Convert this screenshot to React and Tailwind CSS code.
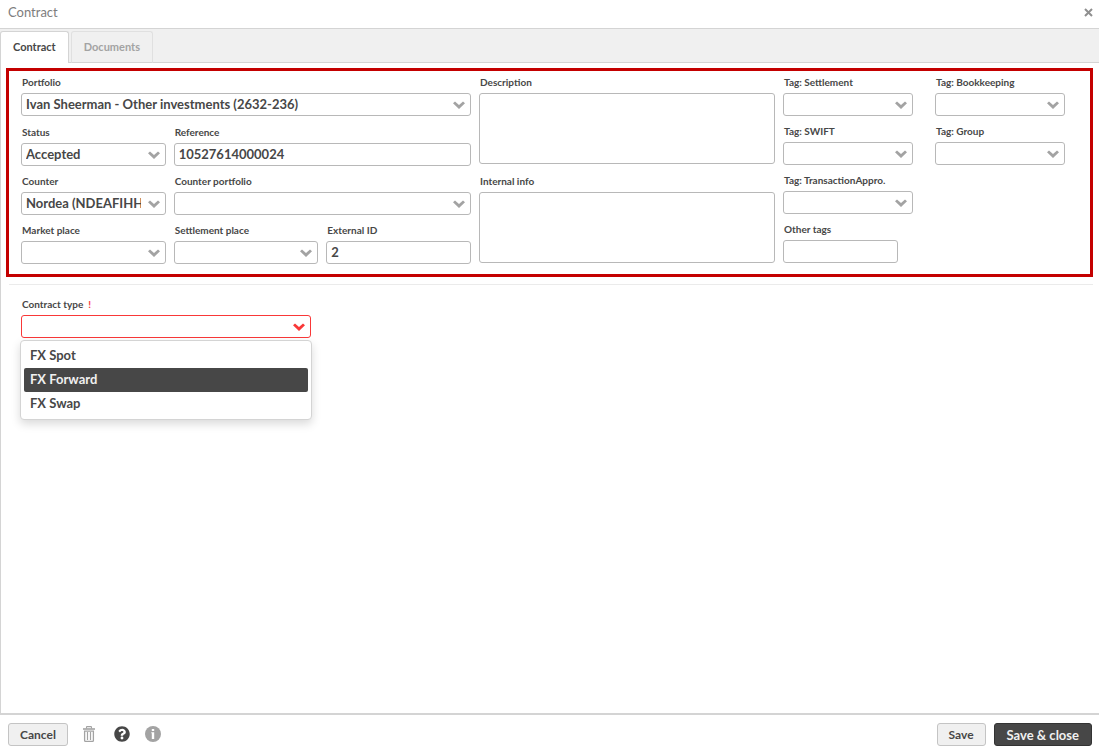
import { useState } from "react";
import { FaQuestionCircle } from "react-icons/fa";

const CONTRACT_TYPES = ["FX Spot", "FX Forward", "FX Swap"];

function Chevron() {
  return (
    <svg
      viewBox="0 0 12 8"
      className="pointer-events-none absolute right-1.5 top-2 h-2 w-3"
      fill="currentColor"
    >
      <path d="M0 2.3 L2 0.4 L6 4 L10 0.4 L12 2.3 L6 8 Z" />
    </svg>
  );
}

function TrashIcon() {
  return (
    <svg viewBox="0 0 12 16" className="h-4 w-3" fill="none" stroke="currentColor">
      <path d="M0 3 H12" strokeWidth="1.6" />
      <path d="M3.5 2.5 V1.2 Q3.5 0.6 4.1 0.6 H7.9 Q8.5 0.6 8.5 1.2 V2.5" strokeWidth="1.1" />
      <path d="M1.6 5.2 H10.4 V14.4 Q10.4 15.3 9.5 15.3 H2.5 Q1.6 15.3 1.6 14.4 Z" strokeWidth="1.3" />
      <path d="M4.5 6 V14 M7.5 6 V14" strokeWidth="1.2" />
    </svg>
  );
}

function InfoIcon() {
  return (
    <svg viewBox="0 0 16 16" className="size-4">
      <circle cx="8" cy="8" r="8" fill="currentColor" />
      <path d="M6.8 3 H9.2 V5 H6.8 Z M6.3 6.2 H9.2 V13 H6.8 V7.2 H6.3 Z" fill="#ffffff" />
    </svg>
  );
}

function Field({ id, label, required, className = "", children }) {
  return (
    <div className={`flex min-w-0 flex-col gap-[3px] ${className}`}>
      <label htmlFor={id} className="pl-px text-[10px] leading-4 font-bold whitespace-nowrap">
        {label}
        {required && <span className="ml-[5px] text-[#f93838]">!</span>}
      </label>
      {children}
    </div>
  );
}

function SelectField({ id, label, value = "", className, width = "" }) {
  return (
    <Field id={id} label={label} className={className}>
      <div className={`relative text-[#a3a3a3] ${width}`}>
        <select
          id={id}
          defaultValue={value}
          className="block h-[23px] w-full appearance-none rounded-[3px] border border-[#b8b8b8] bg-white pr-6 pl-1 text-[13px] font-bold text-[#474747]"
        >
          <option value={value}>{value}</option>
        </select>
        <Chevron />
      </div>
    </Field>
  );
}

function TextField({ id, label, value = "", className, width = "w-full" }) {
  return (
    <Field id={id} label={label} className={className}>
      <input
        id={id}
        type="text"
        defaultValue={value}
        className={`block h-[23px] rounded-[3px] border border-[#b8b8b8] bg-white px-1 pb-0.5 text-[13px] font-bold ${width}`}
      />
    </Field>
  );
}

function TextAreaField({ id, label }) {
  return (
    <Field id={id} label={label}>
      <textarea
        id={id}
        className="block h-[71px] w-full resize-none rounded-[3px] border border-[#b8b8b8] bg-white p-1 text-[13px] font-bold"
      />
    </Field>
  );
}

function ContractType() {
  const [type, setType] = useState("");
  const [open, setOpen] = useState(true);
  const [active, setActive] = useState("FX Forward");

  const pick = (name) => {
    setType(name);
    setOpen(false);
  };

  return (
    <Field id="contract-type" label="Contract type" required className="w-[290px]">
      <div className="relative text-[#f93838]">
        <select
          id="contract-type"
          value={type}
          onChange={(e) => pick(e.target.value)}
          className="block h-[23px] w-full appearance-none rounded-[3px] border border-[#f93838] bg-white pr-6 pl-1 text-[13px] font-bold text-[#474747]"
        >
          <option value=""></option>
          {CONTRACT_TYPES.map((name) => (
            <option key={name} value={name}>
              {name}
            </option>
          ))}
        </select>
        <Chevron />
        {open && (
          <ul
            role="listbox"
            aria-label="Contract type"
            className="absolute -inset-x-px top-full mt-0.5 rounded-sm border border-[#d4d4d4] bg-white p-[3px] text-[13px] leading-[22px] font-bold text-[#474747] shadow-[0_4px_10px_rgba(0,0,0,0.15)]"
          >
            {CONTRACT_TYPES.map((name) => (
              <li
                key={name}
                role="option"
                aria-selected={name === active}
                onMouseEnter={() => setActive(name)}
                onClick={() => pick(name)}
                className={`cursor-default rounded-xs px-1.5 pb-0.5 ${name === active ? "bg-[#474747] text-[#f0f0f0]" : ""}`}
              >
                {name}
              </li>
            ))}
          </ul>
        )}
      </div>
    </Field>
  );
}

export default function App() {
  return (
    <div className="flex min-h-screen flex-col bg-white font-[Lato,sans-serif] text-[#474747]">
      <header className="flex h-[29px] items-center justify-between border-b border-[#d4d4d4] pr-1.5 pb-1 pl-2">
        <h1 className="text-[13px] leading-4 text-[#7d7d7d]">Contract</h1>
        <button type="button" aria-label="Close" className="text-[#8f8f8f]">
          <svg viewBox="0 0 9 9" className="size-[9px]" fill="none" stroke="currentColor" strokeWidth="2">
            <path d="M1 1 L8 8 M8 1 L1 8" />
          </svg>
        </button>
      </header>

      <nav
        role="tablist"
        className="flex h-[34px] items-end gap-0.5 border-b border-[#d4d4d4] bg-[#f0f0f0] text-[11px] font-bold"
      >
        <button
          type="button"
          role="tab"
          aria-selected="true"
          className="-mb-px h-8 rounded-t-[3px] border border-b-0 border-[#d4d4d4] bg-white px-3"
        >
          Contract
        </button>
        <button
          type="button"
          role="tab"
          aria-selected="false"
          className="-mb-px h-8 rounded-t-[3px] border border-[#e0e0e0] border-b-[#d4d4d4] px-3 pt-px text-[#a3a3a3]"
        >
          Documents
        </button>
      </nav>

      <main className="flex-1 border-l border-[#d4d4d4] pt-[5px] pr-1.5 pb-4 pl-[5px]">
        <section className="grid grid-cols-[450fr_296fr_296fr] gap-x-2 border-3 border-[#c40000] pt-[3px] pr-[11px] pb-[10px] pl-3">
          <div className="flex flex-col gap-2">
            <SelectField
              id="portfolio"
              label="Portfolio"
              value="Ivan Sheerman - Other investments (2632-236)"
            />
            <div className="grid grid-cols-3 gap-x-2 gap-y-[7px]">
              <SelectField id="status" label="Status" value="Accepted" />
              <TextField id="reference" label="Reference" value="10527614000024" className="col-span-2" />
              <SelectField id="counter" label="Counter" value="Nordea (NDEAFIHHXXX)" />
              <SelectField id="counter-portfolio" label="Counter portfolio" className="col-span-2" />
              <SelectField id="market-place" label="Market place" />
              <SelectField id="settlement-place" label="Settlement place" />
              <TextField id="external-id" label="External ID" value="2" />
            </div>
          </div>

          <div className="flex flex-col gap-[9px]">
            <TextAreaField id="description" label="Description" />
            <TextAreaField id="internal-info" label="Internal info" />
          </div>

          <div className="grid grid-cols-2 content-start gap-x-2 gap-y-[7px]">
            <SelectField id="tag-settlement" label="Tag: Settlement" width="w-9/10" />
            <SelectField id="tag-bookkeeping" label="Tag: Bookkeeping" width="w-9/10" />
            <SelectField id="tag-swift" label="Tag: SWIFT" width="w-9/10" />
            <SelectField id="tag-group" label="Tag: Group" width="w-9/10" />
            <SelectField
              id="tag-transaction"
              label="Tag: TransactionAppro."
              width="w-9/10"
              className="col-start-1"
            />
            <TextField id="other-tags" label="Other tags" width="w-4/5" className="col-start-1" />
          </div>
        </section>

        <section className="mt-[7px] ml-[3px] border-t border-[#ebebeb] pt-[11px] pl-3">
          <ContractType />
        </section>
      </main>

      <footer className="flex items-center justify-between border-t-2 border-[#d4d4d4] py-2 pr-[7px] pl-2 text-[12px] font-bold">
        <div className="flex items-center">
          <button
            type="button"
            className="h-[23px] rounded-[3px] border border-[#c4c4c4] bg-[#f0f0f0] px-[11px]"
          >
            Cancel
          </button>
          <div className="flex gap-[15px] pb-px pl-[15px]">
            <button type="button" aria-label="Delete" className="pr-1 text-[#a3a3a3]">
              <TrashIcon />
            </button>
            <button type="button" aria-label="Help">
              <FaQuestionCircle size={16} />
            </button>
            <button type="button" aria-label="Info" className="text-[#a3a3a3]">
              <InfoIcon />
            </button>
          </div>
        </div>
        <div className="flex items-center gap-2">
          <button
            type="button"
            className="h-[23px] rounded-[3px] border border-[#c4c4c4] bg-[#f0f0f0] px-[11px]"
          >
            Save
          </button>
          <button
            type="button"
            className="h-[23px] rounded-[3px] border border-[#333333] bg-[#474747] px-3 text-[13px] leading-5 text-[#f0f0f0]"
          >
            Save &amp; close
          </button>
        </div>
      </footer>
    </div>
  );
}
